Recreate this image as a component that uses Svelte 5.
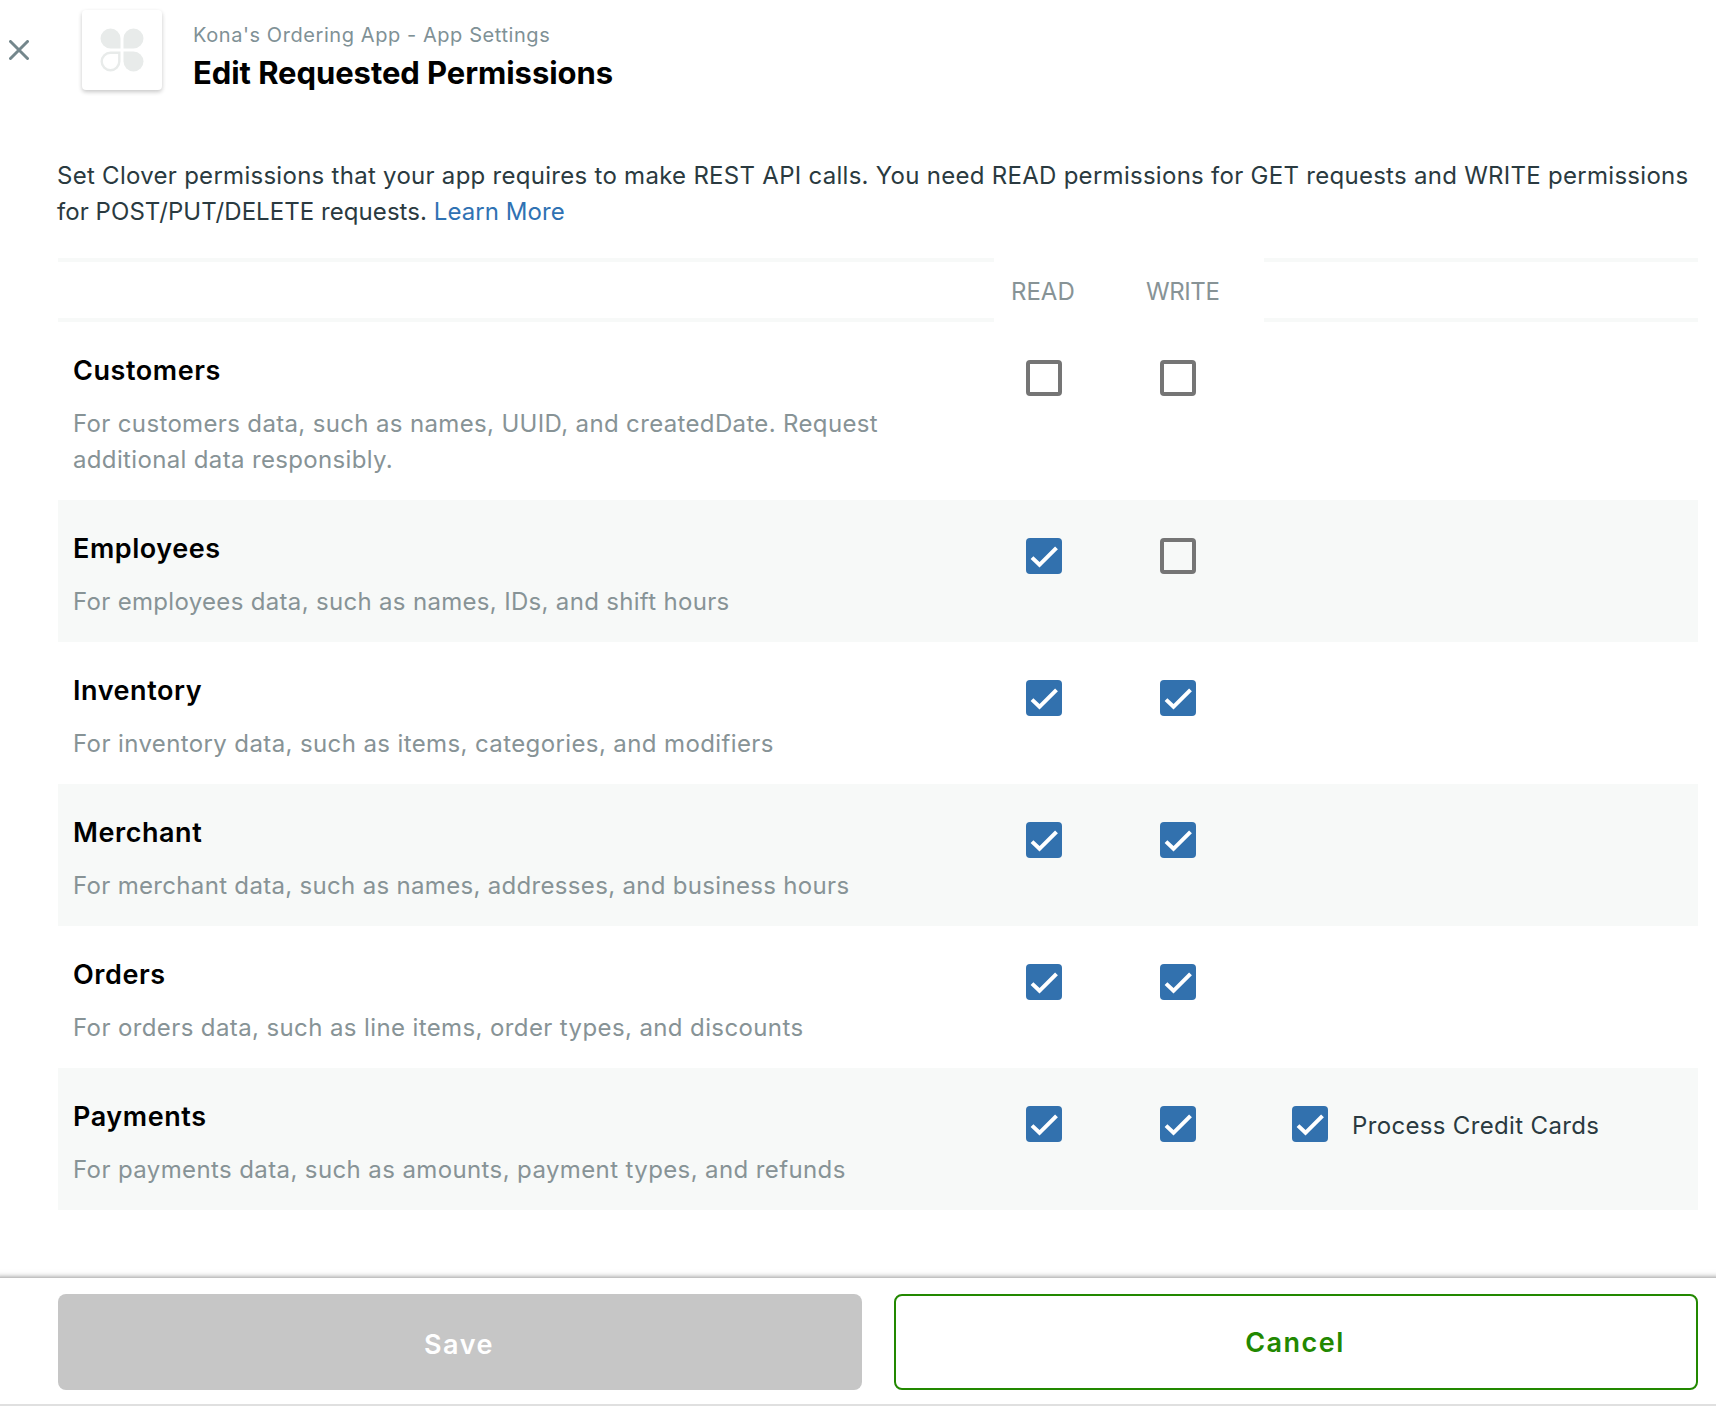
<script>
  const rows = [
    { name: 'Customers', text: 'For customers data, such as names, UUID, and createdDate. Request additional data responsibly.', read: false, write: false },
    { name: 'Employees', text: 'For employees data, such as names, IDs, and shift hours', read: true, write: false },
    { name: 'Inventory', text: 'For inventory data, such as items, categories, and modifiers', read: true, write: true },
    { name: 'Merchant', text: 'For merchant data, such as names, addresses, and business hours', read: true, write: true },
    { name: 'Orders', text: 'For orders data, such as line items, order types, and discounts', read: true, write: true },
    { name: 'Payments', text: 'For payments data, such as amounts, payment types, and refunds', read: true, write: true, extra: 'Process Credit Cards' }
  ];
</script>

{#snippet box(on, label)}
  <span class="box" class:on role="checkbox" aria-checked={on} aria-label={label} tabindex="0">
    {#if on}
      <svg viewBox="0 0 36 36"><path d="M6 19.6 L13.5 26.8 L30.5 9.8" /></svg>
    {/if}
  </span>
{/snippet}

<div class="page">
  <header>
    <svg class="close" viewBox="0 0 20 20"><path d="M1.5 1.5 L18.5 18.5 M18.5 1.5 L1.5 18.5" /></svg>
    <div class="logo">
      <svg viewBox="0 0 44 44">
        <path d="M20.5 20.5 H10.5 A10 10 0 1 1 20.5 10.5 Z" />
        <path d="M23.5 20.5 V10.5 A10 10 0 1 1 33.5 20.5 Z" />
        <path d="M23.5 23.5 H33.5 A10 10 0 1 1 23.5 33.5 Z" />
        <path class="hollow" d="M19.3 24.7 H10.5 A8.8 8.8 0 1 0 19.3 33.5 Z" />
      </svg>
    </div>
    <div class="titles">
      <div class="sub">Kona's Ordering App - App Settings</div>
      <h1>Edit Requested Permissions</h1>
    </div>
  </header>

  <main>
    <p class="intro">
      <span class="line first">Set Clover permissions that your app requires to make REST API calls. You need READ permissions for GET requests and WRITE permissions</span>
      <span class="line second">for POST/PUT/DELETE requests. <span class="link">Learn More</span></span>
    </p>
    <div class="head">
      <div class="rule"></div>
      <div class="col read">READ</div>
      <div class="col write">WRITE</div>
      <div class="rule"></div>
    </div>
    {#each rows as r}
      <section class="row {r.name.toLowerCase()}">
        <div class="info">
          <h2>{r.name}</h2>
          <p>{r.text}</p>
        </div>
        <div class="cell">{@render box(r.read, r.name + ' read')}</div>
        <div class="cell">{@render box(r.write, r.name + ' write')}</div>
        <div class="cell extra">
          {#if r.extra}
            {@render box(true, r.extra)}
            <span class="label">{r.extra}</span>
          {/if}
        </div>
      </section>
    {/each}
  </main>

  <footer>
    <button class="save">Save</button>
    <button class="cancel">Cancel</button>
  </footer>
</div>

<style>
  :global(body) { background: #fff; }
  .page {
    width: 1716px;
    height: 1406px;
    display: flex;
    flex-direction: column;
    box-sizing: border-box;
    overflow: hidden;
    font-family: Inter, "Liberation Sans", sans-serif;
    font-size: 24px;
    color: #2a3a40;
    background: #fff;
  }
  header { display: flex; height: 158px; padding-left: 9px; flex: none; box-sizing: border-box; }
  .close { width: 20px; height: 20px; margin-top: 40px; flex: none; }
  .close path { stroke: #74878c; stroke-width: 3; stroke-linecap: round; fill: none; }
  .logo {
    width: 80px; height: 80px; margin: 10px 0 0 53px; border-radius: 4px; flex: none;
    display: flex; align-items: center; justify-content: center;
    box-shadow: 0 2px 4px rgba(0, 0, 0, 0.22);
  }
  .logo svg { width: 44px; height: 44px; fill: #e8ebea; }
  .logo .hollow { fill: none; stroke: #e8ebea; stroke-width: 2.4; }
  .titles { margin-left: 31px; padding-top: 20px; white-space: nowrap; }
  .sub { font-size: 20px; line-height: 30px; letter-spacing: 0.57px; color: #7f9196; }
  h1 { margin: 3px 0 0; font-size: 31px; line-height: 40px; font-weight: 700; letter-spacing: -0.06px; color: #000; }
  main { margin-left: 58px; width: 1640px; height: 1120px; flex: none; }
  .intro { margin: 0 0 0 -1px; height: 100px; line-height: 36px; }
  .line { display: block; white-space: nowrap; letter-spacing: 0.28px; }
  .second { letter-spacing: 0.06px; }
  .link { color: #2f72b3; }
  .head { display: flex; height: 64px; color: #879396; }
  .rule { box-sizing: border-box; width: 936px; border: solid #f7f9f8; border-width: 4px 0; }
  .rule:last-child { width: 434px; }
  .col { box-sizing: border-box; width: 135px; padding-left: 17px; line-height: 67px; }
  .write { letter-spacing: -0.4px; }
  .row { display: flex; height: 142px; }
  .row.customers { height: 178px; }
  .row:nth-child(even) { background: #f7f9f8; }
  .info { width: 968px; padding-left: 15px; box-sizing: border-box; flex: none; }
  h2 { margin: 31px 0 0; font-size: 27px; line-height: 36px; font-weight: 600; letter-spacing: 0.56px; color: #000; }
  .info p { margin: 17px 0 0; width: 850px; line-height: 36px; color: #879396; letter-spacing: 0.39px; }
  .customers .info p { letter-spacing: 0.35px; }
  .employees .info p, .merchant .info p { letter-spacing: 0.32px; }
  .cell { width: 134px; padding-top: 38px; flex: none; }
  .cell.extra { width: 400px; margin-left: -2px; display: flex; }
  .box { display: block; box-sizing: border-box; width: 36px; height: 36px; border: 4px solid #757575; border-radius: 4px; flex: none; }
  .box.on { border: 0; background: #3271ae; }
  .box svg { display: block; width: 36px; height: 36px; }
  .box path { fill: none; stroke: #fff; stroke-width: 4; }
  .label { margin-left: 24px; line-height: 40px; white-space: nowrap; letter-spacing: 0.34px; }
  footer {
    display: flex; gap: 32px; box-sizing: border-box; height: 128px; padding: 16px 18px 14px 58px; flex: none;
    background: #fff; border-bottom: 2px solid #e0e0e0; box-shadow: 0 6px 6px 6px rgba(0, 0, 0, 0.55);
  }
  button {
    width: 804px; height: 96px; box-sizing: border-box; border: 0; border-radius: 8px; padding: 0;
    font: 600 27px/96px Inter, "Liberation Sans", sans-serif; letter-spacing: 1.5px;
  }
  .save { background: #c6c6c6; color: #fff; padding: 6px 2px 0 0; line-height: 90px; }
  .cancel { background: #fff; color: #228800; border: 2px solid #228800; padding: 2px 2px 0 0; line-height: 90px; }
</style>
